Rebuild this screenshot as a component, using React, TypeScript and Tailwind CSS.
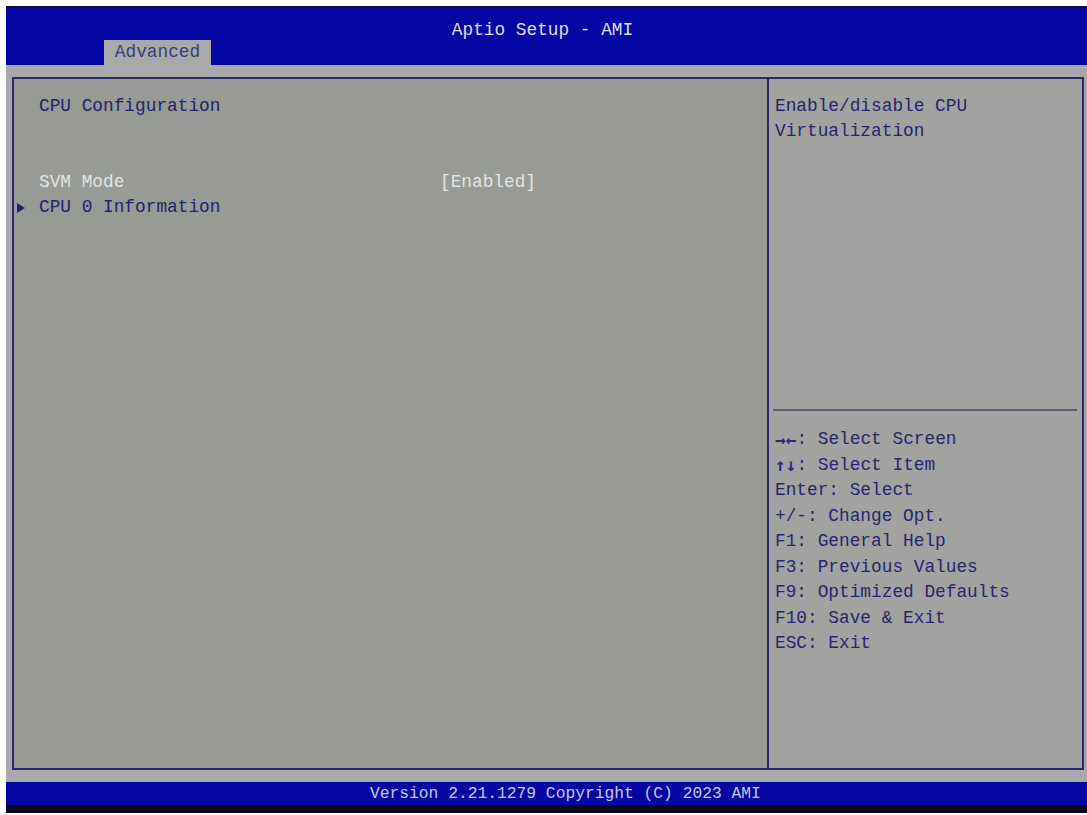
import React from "react";

const helpLines: [string, string][] = [
  ["→←", ": Select Screen"],
  ["↑↓", ": Select Item"],
  ["", "Enter: Select"],
  ["", "+/-: Change Opt."],
  ["", "F1: General Help"],
  ["", "F3: Previous Values"],
  ["", "F9: Optimized Defaults"],
  ["", "F10: Save & Exit"],
  ["", "ESC: Exit"],
];

function Arrow() {
  return (
    <svg width="8" height="10" viewBox="0 0 8 10" className="mt-[8px]">
      <polygon points="0,0 8,5 0,10" fill="#1f1f6e" />
    </svg>
  );
}

export default function App() {
  return (
    <div className="w-[1087px] h-[815px] bg-white pl-[6px] pt-[6px] font-['Liberation_Mono','DejaVu_Sans_Mono',monospace] text-[17.8px] leading-[25.3px]">
      <div className="w-[1081px] h-[807px] flex flex-col bg-[#a9a9ad]">
        {/* title bar */}
        <div className="h-[59px] bg-[#0606a2] border-t-2 border-[#141432] flex flex-col">
          <div className="h-[32px] pt-[10px] pr-[8px] text-center leading-[25px] text-[#dcdcf0]">
            Aptio Setup - AMI
          </div>
          <div className="ml-[98px] w-[107px] h-[25px] bg-[#a8aaa8] text-center leading-[25px] text-[#3a3a80]">
            Advanced
          </div>
        </div>

        <div className="h-[12px]" />

        {/* main frame */}
        <div className="ml-[6px] mr-[3px] h-[693px] border-2 border-[#2a2a68] flex">
          <div className="w-[755px] border-r-2 border-[#2a2a68] bg-[#979a95] pl-[3px] pt-[15px] text-[#23236c]">
            <div className="pl-[22px]">CPU Configuration</div>
            <div className="h-[25.3px]" />
            <div className="h-[25.3px]" />
            <div className="flex">
              <div className="w-[22px]" />
              <div className="w-[401px] text-[#e4e4e4]">SVM Mode</div>
              <div className="text-[#e4e4e4]">[Enabled]</div>
            </div>
            <div className="flex">
              <div className="w-[22px]">
                <Arrow />
              </div>
              <div>CPU 0 Information</div>
            </div>
          </div>

          <div className="flex-1 bg-[#a2a2a0] flex flex-col text-[#26266e]">
            <div className="h-[330px] pl-[6px] pt-[15px]">
              <div>Enable/disable CPU</div>
              <div>Virtualization</div>
            </div>
            <div className="ml-[4px] mr-[5px] h-[2px] bg-[#5c5c7a]" />
            <div className="pl-[6px] pt-[16px]">
              {helpLines.map(([keys, rest]) => (
                <div key={rest} className="h-[25.5px] flex items-center">
                  {keys && (
                    <span className="leading-none font-['DejaVu_Sans_Mono',monospace] font-bold text-[#2a2a80]">{keys}</span>
                  )}
                  <span className="whitespace-pre">{rest}</span>
                </div>
              ))}
            </div>
          </div>
        </div>

        <div className="h-[12px]" />

        {/* footer */}
        <div className="h-[23px] bg-[#0606a2] pl-[364px] text-[16.3px] leading-[23px] text-[#c8c8e6]">
          Version 2.21.1279 Copyright (C) 2023 AMI
        </div>
        <div className="h-[8px] bg-[#08081a]" />
      </div>
    </div>
  );
}
